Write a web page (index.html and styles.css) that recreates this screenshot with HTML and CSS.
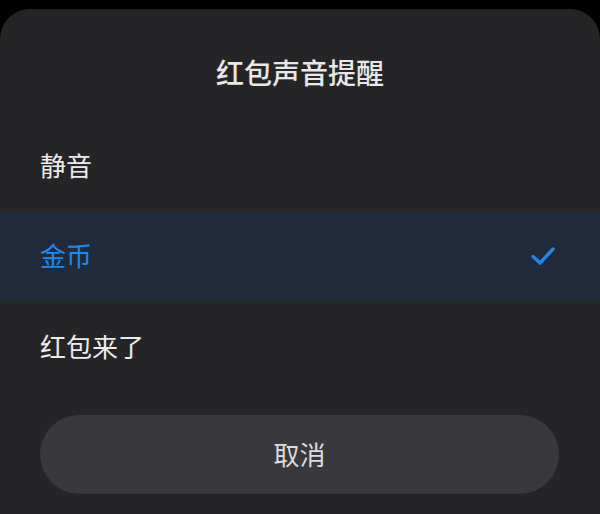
FILE: index.html
```html
<!DOCTYPE html>
<html lang="zh-CN">
<head>
  <meta charset="UTF-8">
  <title>红包声音提醒</title>
  <link rel="stylesheet" href="styles.css">
</head>
<body>

  <div class="sheet">
    <h2 class="sheet-title">红包声音提醒</h2>

    <ul class="options">
      <li class="option">静音</li>
      <li class="option selected">
        <span>金币</span>
        <svg class="check" width="26" height="22" viewBox="0 0 26 22">
          <path d="M3 11.5 L10 18 L23 4" fill="none" stroke="#1e87ee" stroke-width="3.4" stroke-linecap="round" stroke-linejoin="round"/>
        </svg>
      </li>
      <li class="option">红包来了</li>
    </ul>

    <button class="cancel">取消</button>
  </div>

</body>
</html>
```

FILE: styles.css
```css
body {
  margin: 0;
  background: #000;
  font-family: "Noto Sans CJK SC", "Noto Sans", sans-serif;
  height: 514px;
  overflow: hidden;
}

.sheet {
  margin-top: 9px;
  height: 505px;
  background: #252527;
  border-radius: 30px 30px 0 0;
  display: flex;
  flex-direction: column;
}

.sheet-title {
  margin: 0;
  height: 111px;
  padding-top: 43px;
  box-sizing: border-box;
  line-height: 40px;
  text-align: center;
  font-size: 28px;
  font-weight: 500;
  color: #e8e8e8;
}

.options {
  list-style: none;
  margin: 0;
  padding: 0;
}

.option {
  height: 91px;
  padding: 0 40px 3px;
  box-sizing: border-box;
  display: flex;
  align-items: center;
  justify-content: space-between;
  font-size: 26px;
  color: #ececec;
}

.option.selected {
  height: 90px;
  background: #212a3a;
  color: #1f88f0;
}

.check {
  margin-right: 4px;
  margin-top: 3px;
}

.cancel {
  margin: 23px 41px 0 40px;
  height: 79px;
  padding-bottom: 3px;
  border: none;
  border-radius: 40px;
  background: #39383c;
  color: #dcdcdc;
  font-family: inherit;
  font-size: 26px;
}
```
